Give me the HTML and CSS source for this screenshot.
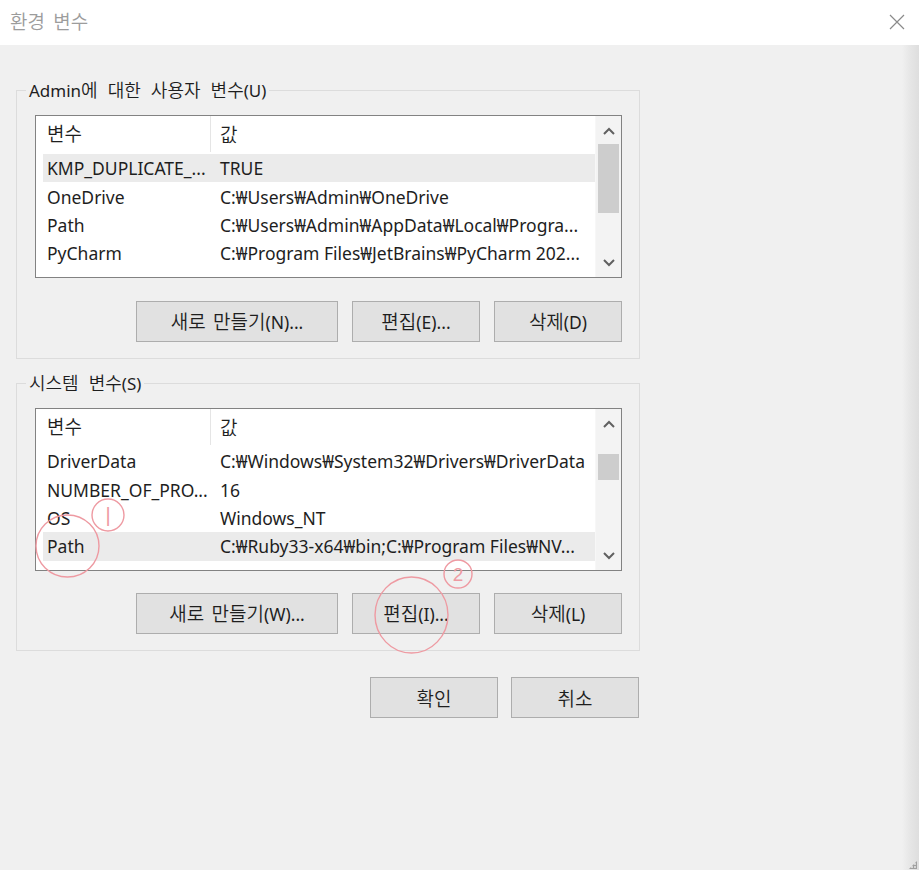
FILE: index.html
```html
<!DOCTYPE html>
<html lang="ko">
<head>
<meta charset="utf-8">
<title>환경 변수</title>
<link rel="stylesheet" href="styles.css">
</head>
<body>
<div class="window">
  <div class="titlebar">
    <span class="title">환경 변수</span>
    <svg class="close" width="16" height="16" viewBox="0 0 16 16"><path d="M1 1 L15 15 M15 1 L1 15" stroke="#8a8a8a" stroke-width="1.2" fill="none"/></svg>
  </div>
  <div class="content">
    <div class="group">
      <span class="legend">Admin<span class="ko">에 대한 사용자 변수</span>(U)</span>
      <div class="listbox">
        <div class="list">
          <div class="header"><div class="hcell c1">변수</div><div class="hcell c2">값</div></div>
          <div class="row sel"><div class="cell c1">KMP_DUPLICATE_...</div><div class="cell c2">TRUE</div></div>
          <div class="row"><div class="cell c1">OneDrive</div><div class="cell c2">C:₩Users₩Admin₩OneDrive</div></div>
          <div class="row"><div class="cell c1">Path</div><div class="cell c2">C:₩Users₩Admin₩AppData₩Local₩Progra...</div></div>
          <div class="row"><div class="cell c1">PyCharm</div><div class="cell c2">C:₩Program Files₩JetBrains₩PyCharm 202...</div></div>
        </div>
        <div class="scrollbar">
          <div class="arrow up"><svg width="12" height="8" viewBox="0 0 12 8"><path d="M1 7 L6 2 L11 7" stroke="#606060" stroke-width="2" fill="none"/></svg></div>
          <div class="track"><div class="thumb thumb1"></div></div>
          <div class="arrow down"><svg width="12" height="8" viewBox="0 0 12 8"><path d="M1 1 L6 6 L11 1" stroke="#606060" stroke-width="2" fill="none"/></svg></div>
        </div>
      </div>
      <div class="buttons">
        <button class="btn wide"><span class="ko">새로 만들기</span>(N)...</button>
        <button class="btn"><span class="ko">편집</span>(E)...</button>
        <button class="btn"><span class="ko">삭제</span>(D)</button>
      </div>
    </div>

    <div class="group second">
      <span class="legend"><span class="ko">시스템 변수</span>(S)</span>
      <div class="listbox">
        <div class="list">
          <div class="header"><div class="hcell c1">변수</div><div class="hcell c2">값</div></div>
          <div class="row"><div class="cell c1">DriverData</div><div class="cell c2">C:₩Windows₩System32₩Drivers₩DriverData</div></div>
          <div class="row"><div class="cell c1">NUMBER_OF_PRO...</div><div class="cell c2">16</div></div>
          <div class="row"><div class="cell c1">OS</div><div class="cell c2">Windows_NT</div></div>
          <div class="row sel"><div class="cell c1">Path</div><div class="cell c2">C:₩Ruby33-x64₩bin;C:₩Program Files₩NV...</div></div>
        </div>
        <div class="scrollbar">
          <div class="arrow up"><svg width="12" height="8" viewBox="0 0 12 8"><path d="M1 7 L6 2 L11 7" stroke="#606060" stroke-width="2" fill="none"/></svg></div>
          <div class="track"><div class="thumb thumb2"></div></div>
          <div class="arrow down"><svg width="12" height="8" viewBox="0 0 12 8"><path d="M1 1 L6 6 L11 1" stroke="#606060" stroke-width="2" fill="none"/></svg></div>
        </div>
      </div>
      <div class="buttons">
        <button class="btn wide"><span class="ko">새로 만들기</span>(W)...</button>
        <button class="btn"><span class="ko">편집</span>(I)...</button>
        <button class="btn"><span class="ko">삭제</span>(L)</button>
      </div>
    </div>

    <div class="footer">
      <button class="btn ko">확인</button>
      <button class="btn ko">취소</button>
    </div>
  </div>

  <svg class="annot" width="919" height="870" viewBox="0 0 919 870">
    <g stroke="#ee9aa2" stroke-width="1.4" fill="none">
      <ellipse cx="67.5" cy="546" rx="31.5" ry="31"/>
      <circle cx="108" cy="515" r="16"/>
      <ellipse cx="411.5" cy="615" rx="36.5" ry="38"/>
      <circle cx="458" cy="574" r="14"/>
    </g>
    <g fill="#ee9aa2" font-family="Liberation Sans, sans-serif">
      <text x="108" y="522" font-size="20" text-anchor="middle">|</text>
      <text x="458" y="581" font-size="19" text-anchor="middle">2</text>
    </g>
  </svg>
  <div class="grip"></div>
</div>
</body>
</html>
```

FILE: styles.css
```css
* { box-sizing: border-box; }
html, body { margin: 0; padding: 0; }
body {
  width: 919px;
  height: 870px;
  overflow: hidden;
  background: #f0f0f0;
  font-family: "Noto Sans", "Noto Sans CJK KR", sans-serif;
  font-size: 17.5px;
  color: #1e1e1e;
}
.ko {
  font-family: "Noto Sans CJK KR", sans-serif;
  font-size: 19px;
  font-weight: 350;
  line-height: 1;
  word-spacing: 2px;
}
.window {
  position: relative;
  width: 919px;
  height: 870px;
  background: linear-gradient(to right, #f0f0f0 0, #f0f0f0 902px, #e6e6e6 910px, #dedede 919px);
}
.titlebar {
  height: 45px;
  background: #ffffff;
  display: flex;
  align-items: center;
  justify-content: space-between;
  padding: 0 14px 4px 10px;
}
.title {
  font-family: "Noto Sans CJK KR", sans-serif;
  font-size: 19px;
  font-weight: 350;
  word-spacing: 3px;
  color: #9c9c9c;
}
.close { display: block; margin-top: 2px; }
.content {
  width: 640px;
  padding: 45px 0 0 16px;
}
.group {
  position: relative;
  border: 1px solid #dcdcdc;
  padding: 24px 17px 16px 18px;
}
.group.second { margin-top: 24px; }
.legend {
  position: absolute;
  top: -11px;
  left: 9px;
  padding: 0 3px;
  background: #f0f0f0;
  font-size: 17px;
  line-height: 20px;
  white-space: nowrap;
  color: #1e1e1e;
}
.legend .ko { font-size: 18px; word-spacing: 5px; }
.listbox {
  display: flex;
  height: 163px;
  border: 1px solid #828282;
  background: #ffffff;
}
.list {
  flex: 1;
  min-width: 0;
  overflow: hidden;
}
.header {
  display: flex;
  height: 38px;
}
.hcell {
  display: flex;
  align-items: center;
  font-family: "Noto Sans CJK KR", sans-serif;
  font-size: 19px;
  font-weight: 350;
  padding-bottom: 3px;
}
.header .c1 {
  width: 175px;
  padding-left: 11px;
  border-right: 1px solid #e5e5e5;
  margin-bottom: 2px;
}
.header .c2 { padding-left: 9px; }
.row {
  display: flex;
  align-items: center;
  height: 28.4px;
  margin-left: 7px;
  white-space: nowrap;
}
.row.sel { background: #ebebeb; }
.cell { overflow: hidden; }
.row .c1 { width: 168px; padding-left: 4px; }
.row .c2 { padding-left: 9px; }
.scrollbar {
  width: 26px;
  display: flex;
  flex-direction: column;
  background: #f3f3f3;
  border-left: 1px solid #f7f7f7;
  padding: 0 1px;
}
.arrow {
  height: 28px;
  display: flex;
  align-items: center;
  justify-content: center;
}
.arrow.up { padding-top: 2px; }
.track { flex: 1; }
.thumb { background: #cdcdcd; margin: 0 1px; }
.thumb1 { margin-top: 0; height: 69px; }
.thumb2 { margin-top: 17px; height: 26px; }
.buttons {
  display: flex;
  justify-content: flex-end;
  gap: 14px;
  margin-top: 23px;
}
.second .buttons { margin-top: 22px; }
.btn {
  width: 128px;
  height: 41px;
  background: #e1e1e1;
  border: 1px solid #adadad;
  font-family: "Noto Sans", "Noto Sans CJK KR", sans-serif;
  font-size: 17.5px;
  color: #1e1e1e;
  padding: 0;
  white-space: nowrap;
}
.btn.ko { font-family: "Noto Sans CJK KR", sans-serif; font-size: 19px; }
.btn.wide { width: 202px; }
.footer {
  display: flex;
  justify-content: flex-end;
  gap: 13px;
  margin-top: 26px;
  padding-right: 1px;
}
.annot {
  position: absolute;
  left: 0;
  top: 0;
  pointer-events: none;
}
.grip {
  position: absolute;
  right: 2px;
  bottom: 1px;
  width: 8px;
  height: 8px;
  background: radial-gradient(circle, #a0a0a0 1px, transparent 1.5px) 0 0 / 3px 3px;
  clip-path: polygon(100% 0, 100% 100%, 0 100%);
}
```
